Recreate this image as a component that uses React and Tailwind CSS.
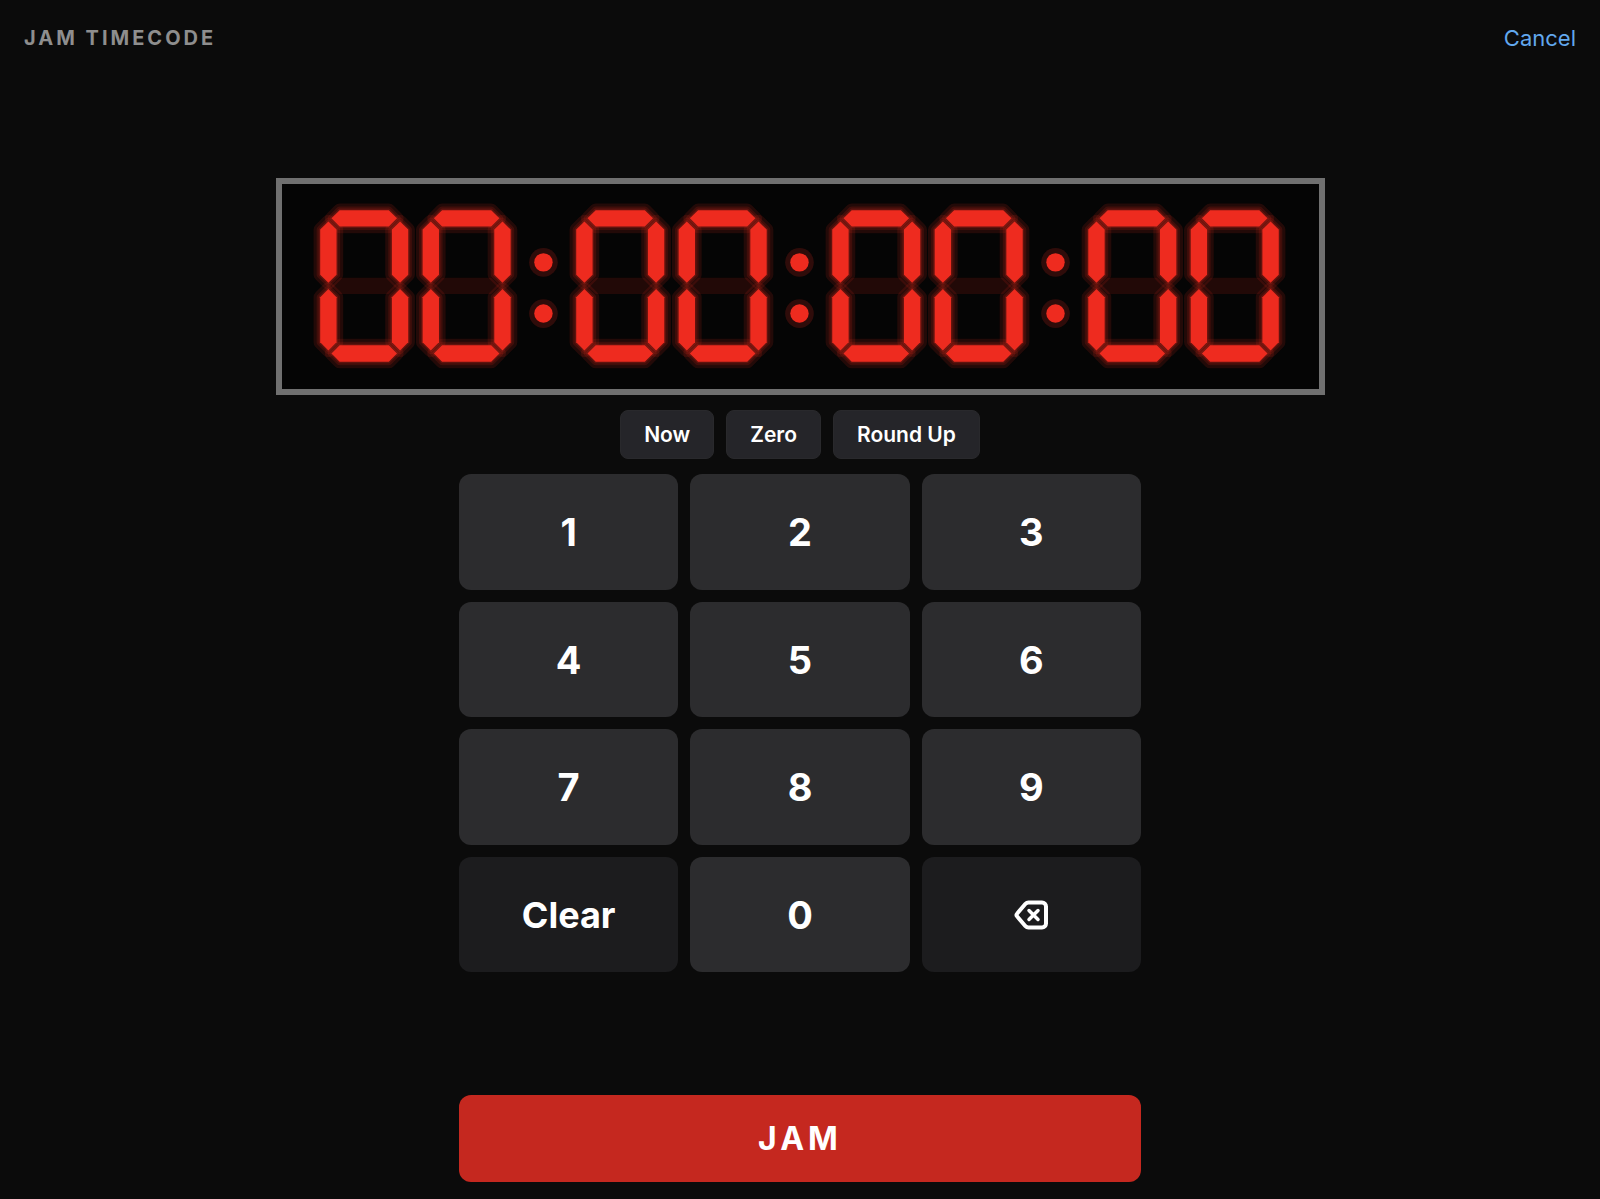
import React from 'react';
import { clsx } from 'clsx';

// Each segment is a hexagon, drawn inside a 100 x 160 digit cell
const SEGMENTS = {
  a: '17,14 25,6 73,6 81,14 73,22 25,22',
  b: '84,17 92,25 92,69 84,77 76,69 76,25',
  c: '84,83 92,91 92,135 84,143 76,135 76,91',
  d: '17,146 25,138 73,138 81,146 73,154 25,154',
  e: '14,83 22,91 22,135 14,143 6,135 6,91',
  f: '14,17 22,25 22,69 14,77 6,69 6,25',
  g: '17,80 25,72 73,72 81,80 73,88 25,88',
};

const LIT = {
  0: 'abcdef',
  1: 'bc',
  2: 'abged',
  3: 'abgcd',
  4: 'fgbc',
  5: 'afgcd',
  6: 'afgedc',
  7: 'abc',
  8: 'abcdefg',
  9: 'abcdfg',
};

const DIGIT_WIDTH = 100;
const COLON_WIDTH = 50;

const Digit = ({ value, x }) => (
  <g transform={`translate(${x} 0)`}>
    {Object.entries(SEGMENTS).map(([name, points]) =>
      LIT[value].includes(name) ? null : <polygon key={name} points={points} fill="#220907" />
    )}
    {[...LIT[value]].map((name) => (
      <g key={name} stroke="#f02b1f" strokeLinejoin="round">
        <polygon points={SEGMENTS[name]} fill="none" strokeWidth="13" strokeOpacity="0.13" />
        <polygon points={SEGMENTS[name]} fill="none" strokeWidth="7" strokeOpacity="0.14" />
        <polygon points={SEGMENTS[name]} fill="none" strokeWidth="3" strokeOpacity="0.18" />
      </g>
    ))}
    {[...LIT[value]].map((name) => (
      <polygon key={name} points={SEGMENTS[name]} fill="#ee2b1f" />
    ))}
  </g>
);

const Colon = ({ x }) => (
  <g transform={`translate(${x} 0)`} fill="#ee2b1f">
    {[57, 107].map((cy) => (
      <g key={cy}>
        <circle cx="24" cy={cy} r="14" fillOpacity="0.18" />
        <circle cx="24" cy={cy} r="9" />
      </g>
    ))}
  </g>
);

const TimecodeDisplay = ({ timecode }) => {
  let x = 0;
  const glyphs = [...timecode].map((char, idx) => {
    const at = x;
    x += char === ':' ? COLON_WIDTH : DIGIT_WIDTH;
    return char === ':' ? <Colon key={idx} x={at} /> : <Digit key={idx} value={char} x={at} />;
  });

  return (
    <div className="w-full max-w-[1049px] border-6 border-[#707070] bg-[#050505] px-8 pt-5 pb-[22px]">
      <svg viewBox={`0 0 ${x} 160`} className="block w-full overflow-visible" role="img" aria-label={timecode}>
        {glyphs}
      </svg>
    </div>
  );
};

const BackspaceIcon = () => (
  <svg viewBox="-1 0 36 32" className="h-8 w-9" fill="none" stroke="currentColor" strokeLinecap="round" strokeLinejoin="round" aria-hidden="true">
    <path d="M14.5 3.5H28a4 4 0 0 1 4 4v17a4 4 0 0 1-4 4H14.5a4 4 0 0 1-3-1.3L3.2 17.5a2.2 2.2 0 0 1 0-3L11.5 4.8a4 4 0 0 1 3-1.3z" strokeWidth="4" />
    <path d="M15 11.5l9 9M24 11.5l-9 9" strokeWidth="3.5" />
  </svg>
);

const ShortcutButton = ({ children }) => (
  <button type="button" className="h-[49px] rounded-lg border border-[#29292c] bg-[#252529] px-[23px] text-[21px] font-semibold text-white">
    {children}
  </button>
);

const Key = ({ children, muted = false, ...props }) => (
  <button
    type="button"
    className={clsx(
      'flex items-center justify-center rounded-xl leading-none font-bold text-white',
      muted ? 'bg-[#1c1c1e] text-[36px]' : 'bg-[#2c2c2e] text-[38px]'
    )}
    {...props}
  >
    {children}
  </button>
);

export default function App() {
  return (
    <div className="flex min-h-screen flex-col bg-[#0b0b0b] font-['Inter',sans-serif]">
      <header className="flex h-[76px] items-center justify-between px-6">
        <h1 className="text-[20px] font-bold tracking-[3px] text-[#8e8e8e]">JAM TIMECODE</h1>
        <button type="button" className="text-[22px] text-[#62a8ee]">
          Cancel
        </button>
      </header>

      <main className="flex flex-1 flex-col items-center justify-center gap-[15px] px-6">
        <TimecodeDisplay timecode="00:00:00:00" />

        <div className="flex gap-3">
          <ShortcutButton>Now</ShortcutButton>
          <ShortcutButton>Zero</ShortcutButton>
          <ShortcutButton>Round Up</ShortcutButton>
        </div>

        {/* Keypad */}
        <div className="grid h-[498px] w-full max-w-[682px] grid-cols-3 grid-rows-4 gap-3">
          {[1, 2, 3, 4, 5, 6, 7, 8, 9].map((n) => (
            <Key key={n}>{n}</Key>
          ))}
          <Key muted>Clear</Key>
          <Key>0</Key>
          <Key muted aria-label="Backspace">
            <BackspaceIcon />
          </Key>
        </div>
      </main>

      <footer className="flex justify-center px-6 pt-[21px] pb-[17px]">
        <button type="button" className="h-[87px] w-full max-w-[682px] rounded-xl bg-[#c5281f] text-[32px] font-bold tracking-[4px] text-white">
          JAM
        </button>
      </footer>
    </div>
  );
}
